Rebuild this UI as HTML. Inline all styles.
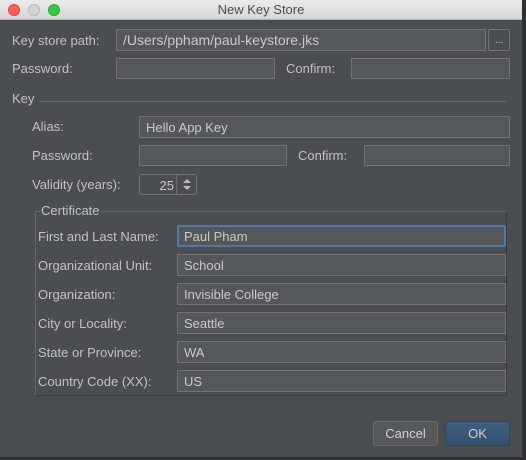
<!DOCTYPE html>
<html><head><style>
*{margin:0;padding:0;box-sizing:border-box}
body{width:526px;height:460px;background:#2e3033;overflow:hidden;position:relative;font-family:"Liberation Sans",sans-serif;font-size:13px;color:#c2c2c2}
#win{position:absolute;left:0;top:0;width:522px;height:457px;background:#4b4e51}
#title{position:absolute;left:0;top:0;width:522px;height:20px;background:linear-gradient(#ebebeb,#d6d6d6);border-bottom:1px solid #b0b0b0;color:#4d4d4d;text-align:center;line-height:20px;font-size:13px}
.dot{position:absolute;top:4px;width:12px;height:12px;border-radius:50%}
.l{position:absolute;white-space:nowrap;line-height:16px}
.f{position:absolute;background:#54585a;border:1px solid #707274;height:22px;padding-left:6px;line-height:21px;color:#cacaca;white-space:nowrap}
.btn{position:absolute;height:25px;border-radius:3px;text-align:center;line-height:23px;color:#d0d0d0}
</style></head><body>
<div id="win">
<div id="title">New Key Store
<div class="dot" style="left:8px;background:#fc5f57;border:1px solid #de4a42"></div>
<div class="dot" style="left:28px;background:#d3d3d3;border:1px solid #bcbcbc"></div>
<div class="dot" style="left:48px;background:#34c84a;border:1px solid #27aa35"></div>
</div>

<div class="l" style="left:12px;top:33px">Key store path:</div>
<div class="f" style="left:116px;top:29px;width:370px;font-size:14px">/Users/ppham/paul-keystore.jks</div>
<div class="f" style="left:488px;top:29px;width:22px;padding:0;text-align:center;background:#4b4e51;border-radius:2px;font-size:10px">...</div>

<div class="l" style="left:12px;top:61px">Password:</div>
<div class="f" style="left:116px;top:58px;width:159px;height:21px"></div>
<div class="l" style="left:286px;top:61px">Confirm:</div>
<div class="f" style="left:351px;top:58px;width:159px;height:21px"></div>

<div class="l" style="left:12px;top:91px">Key</div>
<div style="position:absolute;left:40px;top:101px;width:466px;height:1px;background:#646668"></div>

<div class="l" style="left:32px;top:119px">Alias:</div>
<div class="f" style="left:139px;top:116px;width:371px">Hello App Key</div>

<div class="l" style="left:32px;top:148px">Password:</div>
<div class="f" style="left:139px;top:145px;width:148px;height:21px"></div>
<div class="l" style="left:298px;top:148px">Confirm:</div>
<div class="f" style="left:364px;top:145px;width:146px;height:21px"></div>

<div class="l" style="left:32px;top:177px">Validity (years):</div>
<div class="f" style="left:139px;top:174px;width:58px;height:21px;border-radius:3px;background:#4b4e51;padding:0"><span style="position:absolute;right:22px;top:0">25</span><div style="position:absolute;left:36px;top:0;width:1px;height:19px;background:#6b6d6e"></div><div style="position:absolute;left:43px;top:4px;border:4px solid transparent;border-bottom:4px solid #bbb;border-top:0;width:0"></div><div style="position:absolute;left:43px;top:11px;border:4px solid transparent;border-top:4px solid #bbb;border-bottom:0;width:0"></div></div>

<div style="position:absolute;left:35px;top:211px;width:472px;height:185px;border:1px solid #646668;border-right-color:#3a3c3e;border-bottom-color:#3a3c3e"></div>
<div class="l" style="left:40px;top:203px;background:#4b4e51;padding:0 1px">Certificate</div>

<div class="l" style="left:38px;top:229px">First and Last Name:</div>
<div class="f" style="left:177px;top:225px;width:329px;border:2px solid #4a7aa8;border-radius:2px;padding-left:5px;line-height:19px">Paul Pham</div>
<div class="l" style="left:38px;top:258px">Organizational Unit:</div>
<div class="f" style="left:177px;top:254px;width:329px">School</div>
<div class="l" style="left:38px;top:287px">Organization:</div>
<div class="f" style="left:177px;top:283px;width:329px">Invisible College</div>
<div class="l" style="left:38px;top:316px">City or Locality:</div>
<div class="f" style="left:177px;top:312px;width:329px">Seattle</div>
<div class="l" style="left:38px;top:345px">State or Province:</div>
<div class="f" style="left:177px;top:341px;width:329px">WA</div>
<div class="l" style="left:38px;top:374px">Country Code (XX):</div>
<div class="f" style="left:177px;top:370px;width:329px">US</div>

<div class="btn" style="left:373px;top:421px;width:65px;background:#55595b;border:1px solid #666a6c">Cancel</div>
<div class="btn" style="left:445px;top:421px;width:65px;background:linear-gradient(#3f5e80,#34506e);border:1px solid #2f4660">OK</div>
</div>
</body></html>
